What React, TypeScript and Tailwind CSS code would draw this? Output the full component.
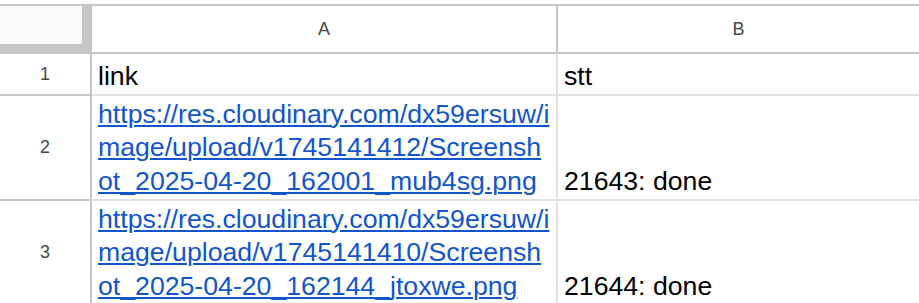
import React from "react";

type Row = {
  n: number;
  link: string;
  isUrl: boolean;
  stt: string;
  height: string;
};

const rows: Row[] = [
  { n: 1, link: "link", isUrl: false, stt: "stt", height: "h-[42px]" },
  {
    n: 2,
    link: "https://res.cloudinary.com/dx59ersuw/image/upload/v1745141412/Screenshot_2025-04-20_162001_mub4sg.png",
    isUrl: true,
    stt: "21643: done",
    height: "h-[105px]",
  },
  {
    n: 3,
    link: "https://res.cloudinary.com/dx59ersuw/image/upload/v1745141410/Screenshot_2025-04-20_162144_jtoxwe.png",
    isUrl: true,
    stt: "21644: done",
    height: "h-[105px]",
  },
];

const App = () => {
  return (
    <div className="w-[919px] h-[303px] overflow-hidden bg-white pt-[4px] font-['Liberation_Sans',Arial,sans-serif]">
      <div className="border-t-2 border-[#c4c7c5] w-[1000px]">
        {/* column headers */}
        <div className="flex h-[48px] border-b-2 border-[#c4c7c5] text-[18px] text-[#444746]">
          <div className="w-[92px] h-full bg-[#c4c7c5]">
            <div className="w-[82px] h-[38px] bg-[#f8f9fa]" />
          </div>
          <div className="w-[466px] border-r-2 border-[#c4c7c5] flex items-center justify-center">
            A
          </div>
          <div className="w-[361px] flex items-center justify-center">B</div>
        </div>

        {rows.map((row) => (
          <div key={row.n} className={`flex ${row.height}`}>
            <div className="w-[92px] border-r-2 border-b-2 border-[#c4c7c5] flex items-center justify-center text-[18px] text-[#444746]">
              {row.n}
            </div>
            <div className="w-[466px] border-r-2 border-b-2 border-[#e1e1e1] flex flex-col justify-end pl-[6px] pr-[2px] pb-[1px] text-[26.67px] leading-[33.5px] break-all">
              {row.isUrl ? (
                <a className="text-[#1155cc] underline decoration-2 underline-offset-2">{row.link}</a>
              ) : (
                <span className="text-black">{row.link}</span>
              )}
            </div>
            <div className="flex-1 border-b-2 border-[#e1e1e1] flex flex-col justify-end pl-[6px] pb-[1px] text-[26.67px] leading-[33.5px] text-black">
              {row.stt}
            </div>
          </div>
        ))}
      </div>
    </div>
  );
};

export default App;
